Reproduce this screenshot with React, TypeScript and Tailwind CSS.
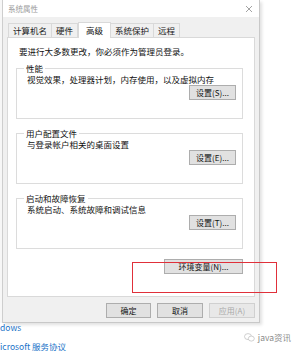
import React from "react";

const font = { fontFamily: '"Microsoft YaHei", "Noto Sans CJK SC", "Noto Sans", sans-serif' };

function Tab({ label, active }: { label: string; active?: boolean }) {
  return (
    <div
      className={
        active
          ? "h-[16px] -mb-px px-[7px] bg-white border border-b-0 border-[#d9d9d9] flex items-center text-[8.5px] text-[#111] z-10 relative"
          : "h-[14px] px-[4px] bg-[#f0f0f0] border border-b-0 border-[#d9d9d9] -ml-px first:ml-0 flex items-center text-[8.5px] text-[#222]"
      }
    >
      {label}
    </div>
  );
}

function Btn({ label, className = "" }: { label: string; className?: string }) {
  return (
    <div
      className={
        "h-[15px] flex items-center justify-center bg-[#e1e1e1] border border-[#adadad] text-[8px] text-[#111] " +
        className
      }
    >
      {label}
    </div>
  );
}

function Group({ title, desc, btn }: { title: string; desc: string; btn: string }) {
  return (
    <fieldset className="border border-[#dcdcdc] h-[56px] px-[6px] pb-[7px] flex flex-col">
      <legend className="ml-[1px] px-[2px] text-[8.5px] leading-[10px] text-[#111]">{title}</legend>
      <div className="pl-[4px] pt-[1px] text-[8.5px] leading-[11px] text-[#111]">{desc}</div>
      <div className="flex-1" />
      <div className="flex justify-end">
        <Btn label={btn} className="w-[47px]" />
      </div>
    </fieldset>
  );
}

export default function App() {
  return (
    <div className="w-[300px] h-[351px] bg-white relative overflow-hidden" style={font}>
      <div className="flex">
        {/* window behind */}
        <div className="w-[3px] h-[323px] bg-[#f7f7f7] border-r border-[#cfcfcf]" />
        {/* dialog */}
        <div className="w-[257px] h-[323px] flex flex-col bg-[#f0f0f0] border-r border-b border-[#c8c8c8] shadow-[2px_2px_3px_rgba(0,0,0,0.12)]">
          <div className="h-[17px] bg-white flex items-center pl-[5px] pr-[6px] shrink-0">
            <span className="text-[7.5px] text-[#9a9a9a]">系统属性</span>
            <div className="flex-1" />
            <svg width="8" height="8" viewBox="0 0 8 8" className="text-[#999]">
              <path d="M1 1 L7 7 M7 1 L1 7" stroke="currentColor" strokeWidth="0.9" />
            </svg>
          </div>
          <div className="flex-1 flex flex-col px-[4px] pt-[5px]">
            <div className="flex items-end pl-[1px] h-[15px]">
              <Tab label="计算机名" />
              <Tab label="硬件" />
              <Tab label="高级" active />
              <Tab label="系统保护" />
              <Tab label="远程" />
            </div>
            <div className="h-[260px] bg-white border border-[#d9d9d9] pl-[8px] pr-[11px] pt-[8px] flex flex-col">
              <div className="pl-[3px] text-[8.5px] leading-[11px] text-[#111]">要进行大多数更改，你必须作为管理员登录。</div>
              <div className="flex flex-col gap-[9px] mt-[6px]">
                <Group title="性能" desc="视觉效果，处理器计划，内存使用，以及虚拟内存" btn="设置(S)..." />
                <Group title="用户配置文件" desc="与登录帐户相关的桌面设置" btn="设置(E)..." />
                <Group title="启动和故障恢复" desc="系统启动、系统故障和调试信息" btn="设置(T)..." />
              </div>
              <div className="flex justify-end mt-[10px]">
                <Btn label="环境变量(N)..." className="w-[79px]" />
              </div>
            </div>
            <div className="flex justify-end gap-[6px] pt-[6px] pr-[0px]">
              <Btn label="确定" className="w-[45px]" />
              <Btn label="取消" className="w-[46px]" />
              <div className="w-[46px] h-[15px] flex items-center justify-center bg-[#e8e8e8] border border-[#d0d0d0] text-[8px] text-[#a8a8a8]">
                应用(A)
              </div>
            </div>
          </div>
        </div>
      </div>
      {/* page behind, below dialog */}
      <div className="text-[8.5px] leading-[9px] text-[#1a73c8]">dows</div>
      <div className="flex items-center justify-end pr-[9px] h-[10px] gap-[3px]">
        <svg width="11" height="9" viewBox="0 0 11 9" className="text-[#bbb]">
          <ellipse cx="4" cy="3.6" rx="3.5" ry="3" fill="none" stroke="currentColor" strokeWidth="0.7" />
          <ellipse cx="7.3" cy="5.6" rx="3" ry="2.5" fill="#fff" stroke="currentColor" strokeWidth="0.7" />
        </svg>
        <span className="text-[8.5px] leading-[10px] text-[#8a8a8a]">java资讯</span>
      </div>
      <div className="text-[8.5px] leading-[9px] text-[#1a73c8]">icrosoft 服务协议</div>
      {/* red annotation box */}
      <div className="absolute left-[132px] top-[262px] w-[145px] h-[31px] border border-[#e0303a]" />
    </div>
  );
}
